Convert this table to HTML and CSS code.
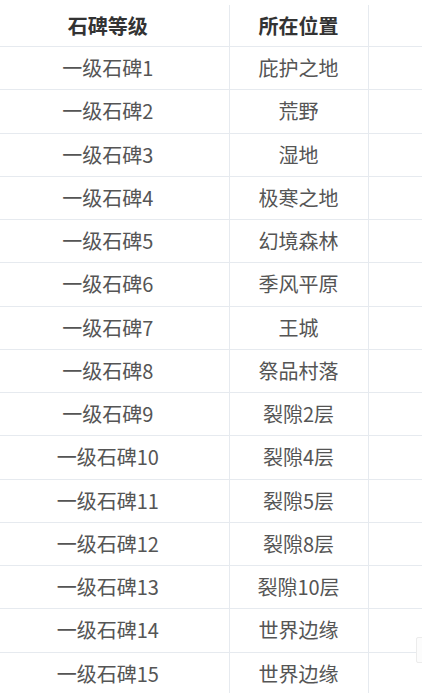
FILE: index.html
```html
<!DOCTYPE html>
<html lang="zh-CN">
<head>
<meta charset="utf-8">
<link rel="stylesheet" href="styles.css">
</head>
<body>
<div class="page">
  <table class="stones">
    <thead>
      <tr><th class="c1">石碑等级</th><th class="c2">所在位置</th><th class="c3"></th></tr>
    </thead>
    <tbody>
      <tr><td class="c1">一级石碑1</td><td class="c2">庇护之地</td><td class="c3"></td></tr>
      <tr><td class="c1">一级石碑2</td><td class="c2">荒野</td><td class="c3"></td></tr>
      <tr><td class="c1">一级石碑3</td><td class="c2">湿地</td><td class="c3"></td></tr>
      <tr><td class="c1">一级石碑4</td><td class="c2">极寒之地</td><td class="c3"></td></tr>
      <tr><td class="c1">一级石碑5</td><td class="c2">幻境森林</td><td class="c3"></td></tr>
      <tr><td class="c1">一级石碑6</td><td class="c2">季风平原</td><td class="c3"></td></tr>
      <tr><td class="c1">一级石碑7</td><td class="c2">王城</td><td class="c3"></td></tr>
      <tr><td class="c1">一级石碑8</td><td class="c2">祭品村落</td><td class="c3"></td></tr>
      <tr><td class="c1">一级石碑9</td><td class="c2">裂隙2层</td><td class="c3"></td></tr>
      <tr><td class="c1">一级石碑10</td><td class="c2">裂隙4层</td><td class="c3"></td></tr>
      <tr><td class="c1">一级石碑11</td><td class="c2">裂隙5层</td><td class="c3"></td></tr>
      <tr><td class="c1">一级石碑12</td><td class="c2">裂隙8层</td><td class="c3"></td></tr>
      <tr><td class="c1">一级石碑13</td><td class="c2">裂隙10层</td><td class="c3"></td></tr>
      <tr><td class="c1">一级石碑14</td><td class="c2">世界边缘</td><td class="c3"></td></tr>
      <tr><td class="c1">一级石碑15</td><td class="c2">世界边缘</td><td class="c3"></td></tr>
    </tbody>
  </table>
  <div class="side-tab"></div>
</div>
</body>
</html>
```

FILE: styles.css
```css
html, body {
  margin: 0;
  padding: 0;
  background: #ffffff;
}
.page {
  position: relative;
  width: 422px;
  height: 693px;
  overflow: hidden;
  padding-top: 5px;
  box-sizing: border-box;
  font-family: "Noto Sans CJK SC", "Noto Sans", sans-serif;
}
.stones {
  border-collapse: collapse;
  table-layout: fixed;
  width: 440px;
}
.stones th, .stones td {
  padding: 0;
  text-align: center;
  vertical-align: middle;
  border-bottom: 1px solid #e6eaef;
  font-size: 20px;
  line-height: 24px;
}
.stones th {
  height: 41px;
  font-weight: bold;
  color: #333333;
}
.stones td {
  height: 42.25px;
  color: #555555;
  font-weight: normal;
}
.c1 {
  width: 229px;
  padding-right: 13px !important;
  box-sizing: border-box;
  border-right: 1px solid #e6eaef;
}
.c2 {
  width: 138px;
  border-right: 1px solid #e6eaef;
}
.c3 {
  width: 73px;
}
.side-tab {
  position: absolute;
  right: -6px;
  top: 637px;
  width: 10px;
  height: 24px;
  border: 1px solid #ececec;
  border-radius: 2px;
  background: #fcfcfc;
}
```
